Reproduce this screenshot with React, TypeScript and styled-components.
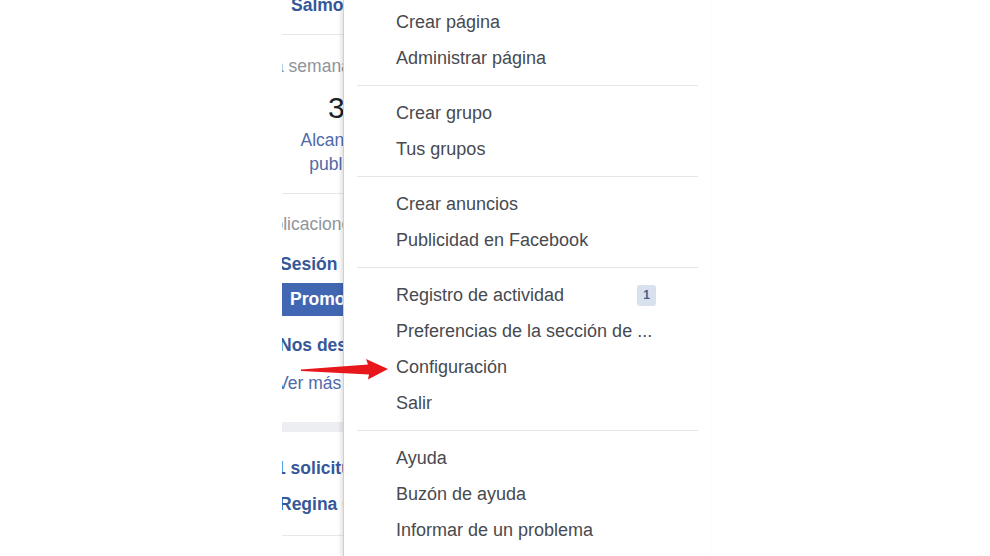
import React from "react";
import styled, { createGlobalStyle } from "styled-components";

const Global = createGlobalStyle`
  html, body { margin: 0; padding: 0; background: #ffffff; }
  body { font-family: "Liberation Sans", Arial, Helvetica, sans-serif; }
  #root { width: 990px; height: 556px; overflow: hidden; }
`;

const Page = styled.div`
  position: relative;
  width: 990px;
  height: 556px;
  overflow: hidden;
  display: flex;
  flex-direction: row;
  padding-left: 282px;
  box-sizing: border-box;
  background: #fff;
`;

const SidePane = styled.div`
  width: 61px;
  flex: none;
  overflow: hidden;
  display: flex;
  flex-direction: column;
  font-size: 17.5px;
`;

const TextRow = styled.div<{ $mt: number; $indent: number; $tone: "link" | "muted" | "soft"; $bold?: boolean }>`
  margin-top: ${(p) => p.$mt}px;
  height: 20px;
  line-height: 20px;
  white-space: nowrap;
  text-indent: ${(p) => p.$indent}px;
  font-weight: ${(p) => (p.$bold ? 700 : 400)};
  color: ${(p) => (p.$tone === "link" ? "#365899" : p.$tone === "soft" ? "#4f6aa8" : "#90949c")};
`;

const Rule = styled.div<{ $mt: number }>`
  margin-top: ${(p) => p.$mt}px;
  height: 1px;
  flex: none;
  background: #e6e7ea;
`;

const StatBlock = styled.div`
  width: 142px;
  flex: none;
  text-align: center;
  margin-top: 16px;
`;

const StatNumber = styled.div`
  font-size: 30px;
  line-height: 32px;
  color: #1d2129;
`;

const StatLabel = styled.div`
  margin-top: 4px;
  font-size: 17.5px;
  line-height: 24px;
  color: #4f6aa8;
`;

const PromoButton = styled.div`
  margin-top: 9px;
  height: 33px;
  line-height: 33px;
  background: #4267b2;
  color: #fff;
  font-weight: 700;
  padding-left: 8px;
  white-space: nowrap;
`;

const GrayBand = styled.div`
  margin-top: 29px;
  height: 10px;
  background: #eceef1;
`;

const Menu = styled.div`
  width: 367px;
  flex: none;
  box-sizing: border-box;
  border-left: 1px solid #cfd0d2;
  box-shadow: -2px 0 4px rgba(0, 0, 0, 0.12);
  padding: 4px 12px 0 13px;
  background: #fff;
  display: flex;
  flex-direction: column;
  position: relative;
  z-index: 1;
`;

const Item = styled.div`
  height: 36px;
  line-height: 36px;
  padding: 0 42px 0 39px;
  font-size: 18px;
  color: #474a50;
  display: flex;
  align-items: center;
  justify-content: space-between;
  white-space: nowrap;
`;

const Separator = styled.div`
  height: 1px;
  margin: 9px 0;
  background: #e5e6e8;
`;

const Badge = styled.span`
  height: 21px;
  line-height: 21px;
  padding: 0 6px;
  border-radius: 3px;
  background: #d9e1ee;
  color: #4a5e88;
  font-size: 12px;
  font-weight: 700;
`;

const Arrow = styled.svg`
  position: absolute;
  left: 0;
  top: 0;
  z-index: 2;
  pointer-events: none;
`;

const groups: { label: string; badge?: string }[][] = [
  [{ label: "Crear página" }, { label: "Administrar página" }],
  [{ label: "Crear grupo" }, { label: "Tus grupos" }],
  [{ label: "Crear anuncios" }, { label: "Publicidad en Facebook" }],
  [
    { label: "Registro de actividad", badge: "1" },
    { label: "Preferencias de la sección de ..." },
    { label: "Configuración" },
    { label: "Salir" },
  ],
  [{ label: "Ayuda" }, { label: "Buzón de ayuda" }, { label: "Informar de un problema" }],
];

export default function App() {
  return (
    <>
      <Global />
      <Page>
        <SidePane>
          <TextRow $mt={-5} $indent={9} $tone="link" $bold>
            Salmo Rodríguez
          </TextRow>
          <Rule $mt={19} />
          <TextRow $mt={21} $indent={-8} $tone="muted">
            a semana
          </TextRow>
          <StatBlock>
            <StatNumber>358</StatNumber>
            <StatLabel>
              Alcance de la
              <br />
              publicación
            </StatLabel>
          </StatBlock>
          <Rule $mt={17} />
          <TextRow $mt={20} $indent={-30} $tone="muted">
            Publicaciones
          </TextRow>
          <TextRow $mt={20} $indent={-2} $tone="link" $bold>
            Sesión ‘Salmo’
          </TextRow>
          <PromoButton>Promocionar</PromoButton>
          <TextRow $mt={19} $indent={-3} $tone="link" $bold>
            Nos despedimos
          </TextRow>
          <TextRow $mt={18} $indent={-5} $tone="soft">
            Ver más
          </TextRow>
          <GrayBand />
          <TextRow $mt={26} $indent={-6} $tone="link" $bold>
            1 solicitud
          </TextRow>
          <TextRow $mt={16} $indent={-3} $tone="link" $bold>
            Regina García
          </TextRow>
          <Rule $mt={21} />
        </SidePane>
        <Menu>
          {groups.map((g, gi) => (
            <React.Fragment key={gi}>
              {gi > 0 && <Separator />}
              {g.map((it) => (
                <Item key={it.label}>
                  <span>{it.label}</span>
                  {it.badge && <Badge>{it.badge}</Badge>}
                </Item>
              ))}
            </React.Fragment>
          ))}
        </Menu>
        <Arrow width="990" height="556" viewBox="0 0 990 556">
          <polygon
            points="301,369.5 368,364.5 366,359 388,369 368,379.5 369,374.5 301,371"
            fill="#e8171c"
          />
        </Arrow>
      </Page>
    </>
  );
}
